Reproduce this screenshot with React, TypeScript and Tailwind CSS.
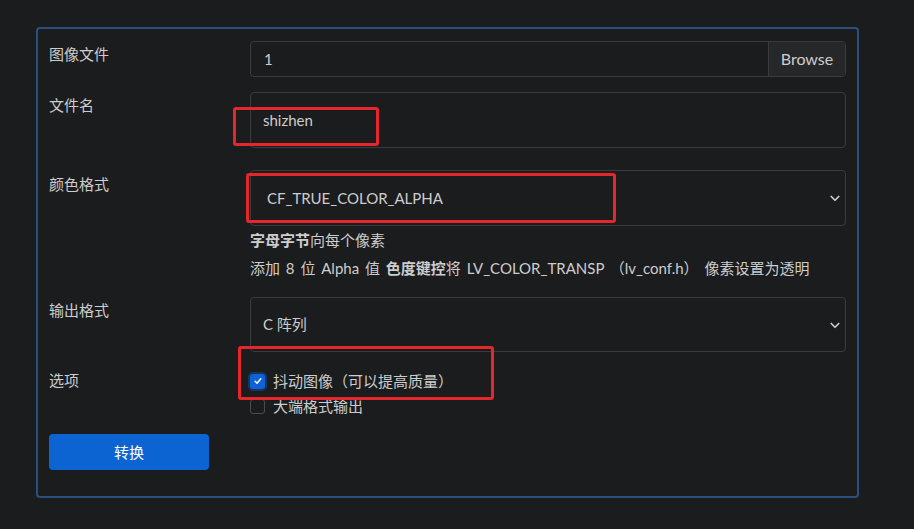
import React from "react";

const Chevron = () => (
  <svg width="12" height="12" viewBox="0 0 16 16" className="absolute right-[4px] top-1/2 -translate-y-1/2">
    <path d="M3 6l5 5 5-5" fill="none" stroke="#d0d0d0" strokeWidth="2.2" strokeLinecap="round" strokeLinejoin="round" />
  </svg>
);

export default function App() {
  const font = { fontFamily: 'Lato, "Noto Sans CJK SC", sans-serif' };
  return (
    <div className="relative min-h-[529px] w-[914px] bg-[#1b1c1e] pl-[36px] pt-[27px] text-[15px] text-[#cdcdcd]" style={font}>
      <div className="w-[823px] h-[471px] rounded-[4px] border-2 border-[#2b4f7e] pl-[11px] pr-[11px] pt-[12px]">
        {/* Row 1 */}
        <div className="flex">
          <div className="w-[201px] pt-[2px] leading-[22px]">图像文件</div>
          <div className="flex h-[36px] flex-1 overflow-hidden rounded-[4px] border border-[#3a3b3e]">
            <div className="flex flex-1 items-center pl-[13px]">1</div>
            <div className="flex w-[77px] items-center justify-center border-l border-[#3a3b3e] bg-[#262729] text-[16px]">Browse</div>
          </div>
        </div>
        {/* Row 2 */}
        <div className="mt-[15px] flex">
          <div className="w-[201px] pt-[2px] leading-[22px]">文件名</div>
          <div className="flex h-[56px] flex-1 items-center rounded-[4px] border border-[#3a3b3e] pl-[12px]">shizhen</div>
        </div>
        {/* Row 3 */}
        <div className="mt-[22px] flex">
          <div className="w-[201px] pt-[3px] leading-[22px]">颜色格式</div>
          <div className="flex-1">
            <div className="relative flex h-[56px] items-center rounded-[4px] border border-[#3a3b3e] pl-[16px]">
              CF_TRUE_COLOR_ALPHA
              <Chevron />
            </div>
            <div className="leading-[28px]">
              <div><span className="font-bold">字母字节</span>向每个像素</div>
              <div className="[word-spacing:2px]">添加 8 位 Alpha 值 <span className="font-bold">色度键控</span>将 LV_COLOR_TRANSP （lv_conf.h） 像素设置为透明</div>
            </div>
          </div>
        </div>
        {/* Row 4 */}
        <div className="mt-[15px] flex">
          <div className="w-[201px] pt-[2px] leading-[22px]">输出格式</div>
          <div className="relative flex h-[55px] flex-1 items-center rounded-[4px] border border-[#3a3b3e] pl-[12px]">
            C 阵列
            <Chevron />
          </div>
        </div>
        {/* Row 5 */}
        <div className="mt-[16px] flex">
          <div className="w-[201px] pt-[1px] leading-[22px]">选项</div>
          <div className="flex flex-col">
            <label className="flex items-center gap-[8px] leading-[26px]">
              <span className="flex h-[15px] w-[15px] items-center justify-center rounded-[3px] bg-[#0d63d6] shadow-[0_0_0_2px_rgba(13,99,214,0.35)]">
                <svg width="10" height="10" viewBox="0 0 16 16">
                  <path d="M3.5 8.5l3 3 6-7" fill="none" stroke="#fff" strokeWidth="2.4" strokeLinecap="round" strokeLinejoin="round" />
                </svg>
              </span>
              抖动图像（可以提高质量）
            </label>
            <label className="flex items-center gap-[8px] leading-[24px]">
              <span className="h-[15px] w-[15px] rounded-[3px] border border-[#4a4b4e]" />
              大端格式输出
            </label>
          </div>
        </div>
        {/* Button */}
        <div className="mt-[16px]">
          <button className="h-[36px] w-[160px] rounded-[4px] bg-[#0b64d1] text-[15px] text-white">转换</button>
        </div>
      </div>

      {/* Red annotation boxes */}
      <div className="pointer-events-none absolute left-[233px] top-[107px] h-[39px] w-[146px] rounded-[3px] border-[3px] border-[#e5262a]" />
      <div className="pointer-events-none absolute left-[246px] top-[173px] h-[50px] w-[370px] rounded-[3px] border-[3px] border-[#e5262a]" />
      <div className="pointer-events-none absolute left-[238px] top-[346px] h-[54px] w-[256px] rounded-[3px] border-[3px] border-[#e5262a]" />
    </div>
  );
}
